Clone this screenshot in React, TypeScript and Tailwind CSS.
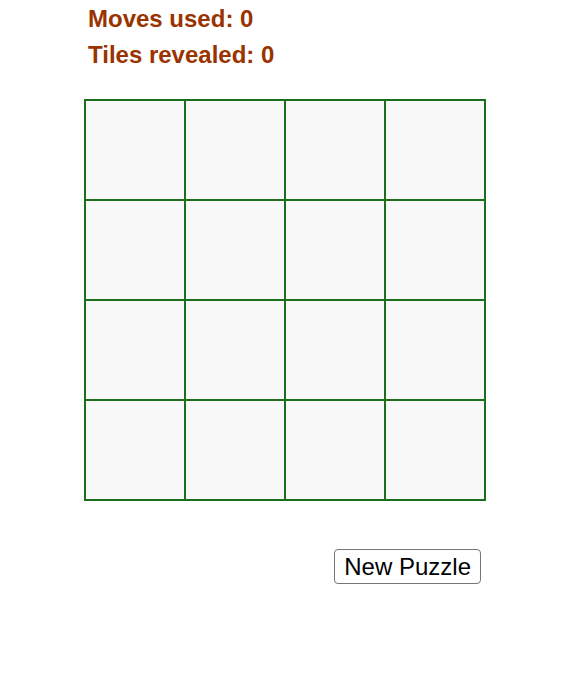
import React from 'react';

// Tablero 4x4 vacío
const cells = Array.from({ length: 16 }, (_, i) => i);

export default function App() {
  return (
    <div className="w-[582px] h-[675px] bg-white font-['Liberation_Sans',Arial,sans-serif]">
      <div className="ml-[84px] w-[402px]">
        {/* Contadores */}
        <div className="pt-[1px] pl-[4px] text-[24px] leading-[36px] font-bold text-[#993300]">
          <div>Moves used: 0</div>
          <div>Tiles revealed: 0</div>
        </div>

        {/* Rejilla */}
        <div className="mt-[26px] grid grid-cols-4 border border-[#1b6e1b]">
          {cells.map((c) => (
            <div key={c} className="h-[100px] border border-[#1b6e1b] bg-[#f8f8f8]" />
          ))}
        </div>

        {/* Botón */}
        <div className="mt-[48px] flex justify-end pr-[5px]">
          <button className="rounded-[4px] border border-[#767676] bg-white px-[9px] py-[3px] text-[24px] leading-[27px] text-black">
            New Puzzle
          </button>
        </div>
      </div>
    </div>
  );
}
